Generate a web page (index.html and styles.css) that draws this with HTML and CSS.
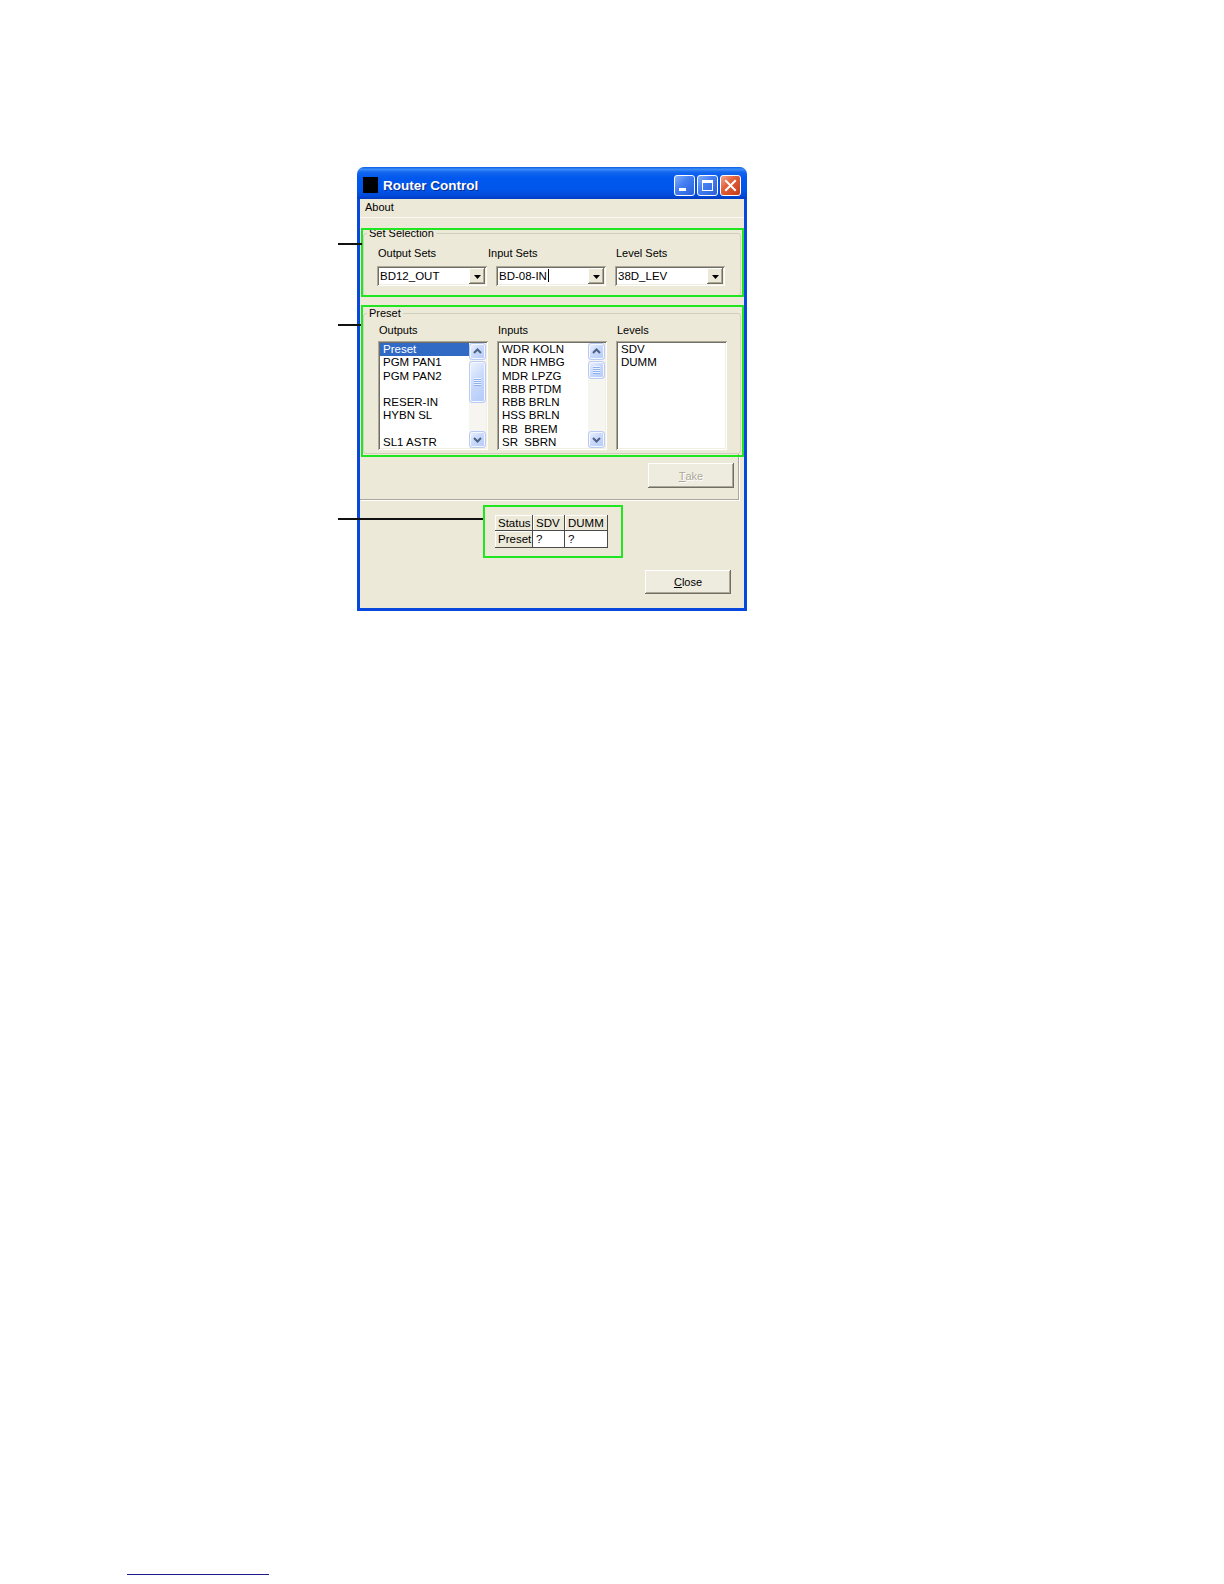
FILE: index.html
```html
<!DOCTYPE html>
<html lang="en">
<head>
<meta charset="utf-8">
<title>Router Control</title>
<link rel="stylesheet" href="styles.css">
</head>
<body>
<div class="page">
  <div class="figure">
    <div class="window">
      <div class="titlebar">
        <div class="app-icon"></div>
        <div class="title">Router Control</div>
        <div class="tb-buttons">
          <div class="tb-btn"><svg width="19" height="19" viewBox="0 0 19 19"><rect x="4" y="12" width="7" height="3" fill="#fff"/></svg></div>
          <div class="tb-btn"><svg width="19" height="19" viewBox="0 0 19 19"><rect x="4.5" y="5.5" width="10" height="9" fill="none" stroke="#fff" stroke-width="1"/><rect x="4" y="4" width="11" height="3" fill="#fff"/></svg></div>
          <div class="tb-btn close"><svg width="19" height="19" viewBox="0 0 19 19"><path d="M5 5 L14 14 M14 5 L5 14" stroke="#fff" stroke-width="2" stroke-linecap="square"/></svg></div>
        </div>
      </div>
      <div class="client">
        <div class="menubar"><span class="menu-item">About</span></div>

        <fieldset class="group set-group">
          <legend>Set Selection</legend>
          <div class="set-body">
            <div class="lbl">Output Sets</div>
            <div class="lbl lbl-shift">Input Sets</div>
            <div class="lbl">Level Sets</div>
            <div class="combo"><span class="combo-text">BD12_OUT</span><span class="combo-btn"><svg width="7" height="4" viewBox="0 0 7 4"><polygon points="0,0 7,0 3.5,4" fill="#000"/></svg></span></div>
            <div class="combo"><span class="combo-text">BD-08-IN<span class="caret"></span></span><span class="combo-btn"><svg width="7" height="4" viewBox="0 0 7 4"><polygon points="0,0 7,0 3.5,4" fill="#000"/></svg></span></div>
            <div class="combo"><span class="combo-text">38D_LEV</span><span class="combo-btn"><svg width="7" height="4" viewBox="0 0 7 4"><polygon points="0,0 7,0 3.5,4" fill="#000"/></svg></span></div>
          </div>
        </fieldset>

        <fieldset class="group preset-group">
          <legend>Preset</legend>
          <div class="preset-body">
            <div class="lbl lbl-out">Outputs</div>
            <div class="lbl">Inputs</div>
            <div class="lbl">Levels</div>

            <div class="list">
              <div class="list-items">
                <div class="item sel">Preset</div>
                <div class="item">PGM PAN1</div>
                <div class="item">PGM PAN2</div>
                <div class="item">&nbsp;</div>
                <div class="item">RESER-IN</div>
                <div class="item">HYBN SL</div>
                <div class="item">&nbsp;</div>
                <div class="item">SL1 ASTR</div>
              </div>
              <div class="sb">
                <div class="sb-btn"><svg width="15" height="15" viewBox="0 0 15 15"><path d="M4 9 L7.5 5.5 L11 9" fill="none" stroke="#4D6185" stroke-width="2"/></svg></div>
                <div class="sb-track"><div class="sb-thumb thumb-long"><div class="grip"></div></div></div>
                <div class="sb-btn"><svg width="15" height="15" viewBox="0 0 15 15"><path d="M4 6 L7.5 9.5 L11 6" fill="none" stroke="#4D6185" stroke-width="2"/></svg></div>
              </div>
            </div>

            <div class="list">
              <div class="list-items">
                <div class="item">WDR KOLN</div>
                <div class="item">NDR HMBG</div>
                <div class="item">MDR LPZG</div>
                <div class="item">RBB PTDM</div>
                <div class="item">RBB BRLN</div>
                <div class="item">HSS BRLN</div>
                <div class="item">RB  BREM</div>
                <div class="item">SR  SBRN</div>
              </div>
              <div class="sb">
                <div class="sb-btn"><svg width="15" height="15" viewBox="0 0 15 15"><path d="M4 9 L7.5 5.5 L11 9" fill="none" stroke="#4D6185" stroke-width="2"/></svg></div>
                <div class="sb-track"><div class="sb-thumb thumb-short"><div class="grip"></div></div></div>
                <div class="sb-btn"><svg width="15" height="15" viewBox="0 0 15 15"><path d="M4 6 L7.5 9.5 L11 6" fill="none" stroke="#4D6185" stroke-width="2"/></svg></div>
              </div>
            </div>

            <div class="list">
              <div class="list-items">
                <div class="item">SDV</div>
                <div class="item">DUMM</div>
              </div>
            </div>
          </div>
        </fieldset>

        <div class="take-panel">
          <div class="btn disabled"><span class="acc">T</span>ake</div>
        </div>

        <div class="bottom">
          <table class="grid">
            <tr class="row-head"><td class="fixed">Status</td><td class="fixed">SDV</td><td class="fixed">DUMM</td></tr>
            <tr class="row-data"><td class="fixed">Preset</td><td class="cell">?</td><td class="cell">?</td></tr>
          </table>
          <div class="btn close-btn"><span class="acc">C</span>lose</div>
        </div>
      </div>
    </div>
  </div>

  <div class="mark mark-set"></div>
  <div class="mark mark-preset"></div>
  <div class="mark mark-status"></div>
  <div class="callout callout-set"></div>
  <div class="callout callout-preset"></div>
  <div class="callout callout-status"></div>

  <div class="footer-link"></div>
</div>
</body>
</html>
```

FILE: styles.css
```css
* { box-sizing: border-box; }
html, body { margin: 0; padding: 0; background: #fff; }
body { font-family: "Liberation Sans", Arial, sans-serif; font-size: 11px; color: #000; }

.page { position: relative; width: 1224px; height: 1584px; overflow: hidden; }
.figure { padding: 167px 0 0 357px; }

.window { width: 390px; }

.titlebar {
  height: 32px;
  border-radius: 7px 7px 0 0;
  background: linear-gradient(to bottom, #0A5AE6 0%, #3D8EF8 7%, #1466EE 16%, #0058EE 34%, #0056EA 70%, #004BDC 88%, #003CC2 100%);
  display: flex;
  align-items: center;
  padding: 4px 6px 0 6px;
}
.app-icon { width: 15px; height: 16px; background: #000; flex: none; }
.title {
  flex: 1;
  margin-left: 5px;
  color: #fff;
  font-weight: bold;
  font-size: 13.5px;
  text-shadow: 1px 1px 0 #0A2A8A;
  white-space: nowrap;
}
.tb-buttons { display: flex; gap: 2px; }
.tb-btn {
  width: 21px; height: 21px;
  border: 1px solid #fff;
  border-radius: 3px;
  background: linear-gradient(135deg, #86AEF8 0%, #4680F2 40%, #2A60DC 100%);
}
.tb-btn.close { background: linear-gradient(135deg, #F4A68C 0%, #E2603A 40%, #C53C17 100%); }
.tb-btn svg { display: block; }

.client {
  background: #ECE9D8;
  border: 3px solid #0848DC;
  border-top: none;
}

.menubar {
  height: 19px;
  line-height: 17px;
  padding-left: 5px;
  border-bottom: 1px solid #FBFAF6;
}

.group {
  margin: 0 3px;
  padding: 0;
  border: 1px solid #D0D0BF;
  border-radius: 3px;
  min-width: 0;
}
.group legend {
  padding: 0 2px;
  margin-left: 3px;
  line-height: 13px;
  font-size: 11px;
}
.set-group { margin-top: 9px; }
.preset-group { margin-top: 11px; }

.set-body {
  display: grid;
  grid-template-columns: 110px 110px 110px;
  grid-template-rows: 13px 20px;
  column-gap: 9px;
  row-gap: 6px;
  padding: 7px 0 9px 13px;
}
.preset-body {
  display: grid;
  grid-template-columns: 110px 110px 111px;
  grid-template-rows: 13px 109px;
  column-gap: 9px;
  row-gap: 4px;
  padding: 4px 0 3px 14px;
}

.lbl { line-height: 13px; white-space: nowrap; padding-left: 1px; }
.lbl-shift { margin-left: -9px; }

.combo {
  height: 20px;
  background: #fff;
  display: flex;
  align-items: center;
  padding: 2px;
  box-shadow: inset 1px 1px 0 #ACA899, inset -1px -1px 0 #fff, inset 2px 2px 0 #716F64, inset -2px -2px 0 #F1EFE2;
}
.combo-text { flex: 1; padding-left: 1px; font-size: 11.5px; line-height: 16px; white-space: nowrap; }
.caret { display: inline-block; width: 1px; height: 13px; background: #000; vertical-align: -2px; margin-left: 1px; }
.combo-btn {
  width: 16px; height: 16px;
  background: #ECE9D8;
  box-shadow: inset -1px -1px 0 #716F64, inset 1px 1px 0 #fff, inset -2px -2px 0 #ACA899;
  display: flex;
  align-items: center;
  justify-content: center;
  padding-top: 2px;
}
.combo-btn svg { display: block; }

.list {
  height: 109px;
  background: #fff;
  padding: 2px;
  display: flex;
  box-shadow: inset 1px 1px 0 #ACA899, inset -1px -1px 0 #fff, inset 2px 2px 0 #716F64, inset -2px -2px 0 #F1EFE2;
}
.list-items { flex: 1; min-width: 0; }
.item { height: 13.3px; line-height: 13.3px; padding-left: 3px; font-size: 11.5px; white-space: pre; }
.item.sel { background: #316AC5; color: #fff; }

.sb { width: 17px; display: flex; flex-direction: column; background: #F6F5EF; }
.sb-btn, .sb-thumb {
  border: 1px solid #B9CBF5;
  border-radius: 3px;
  background: linear-gradient(135deg, #EEF3FE 0%, #CADAFC 45%, #B4C9F7 100%);
  box-shadow: inset 0 0 0 1px #F4F7FE;
}
.sb-btn { height: 17px; display: flex; align-items: center; justify-content: center; }
.sb-btn svg { display: block; }
.sb-track { flex: 1; padding-top: 1px; }
.sb-thumb { display: flex; align-items: center; justify-content: center; }
.thumb-long { height: 42px; }
.thumb-short { height: 18px; }
.grip { width: 7px; height: 8px; background: repeating-linear-gradient(to bottom, #EEF4FE 0, #EEF4FE 1px, #8DAEF3 1px, #8DAEF3 2px); }

.take-panel {
  margin-right: 5px;
  height: 46px;
  padding: 9px 4px 0 0;
  display: flex;
  justify-content: flex-end;
  align-items: flex-start;
  border-right: 1px solid #ACA899;
  border-bottom: 1px solid #ACA899;
  box-shadow: 1px 1px 0 #fff;
}

.btn {
  width: 86px; height: 25px;
  background: #EEEBDF;
  box-shadow: inset -1px -1px 0 #716F64, inset 1px 1px 0 #fff, inset -2px -2px 0 #ACA899;
  display: flex;
  align-items: center;
  justify-content: center;
  font-size: 11px;
}
.btn.disabled { color: #ACA899; text-shadow: 1px 1px 0 #fff; }
.acc { text-decoration: underline; }

.bottom { padding: 15px 0 14px 0; }
.grid {
  margin-left: 135px;
  border-collapse: separate;
  border-spacing: 0;
  table-layout: fixed;
  width: 113px;
  font-size: 11.5px;
}
.grid td {
  padding: 0 0 0 3px;
  white-space: nowrap;
  overflow: hidden;
  border-right: 1px solid #4A4A4A;
  border-bottom: 1px solid #4A4A4A;
  vertical-align: middle;
}
.grid td:nth-child(1) { width: 38px; }
.grid td:nth-child(2) { width: 32px; }
.grid td:nth-child(3) { width: 43px; }
.row-head td { height: 16px; line-height: 14px; }
.row-data td { height: 17px; line-height: 15px; }
.grid .fixed { background: #ECE9D8; box-shadow: inset 1px 1px 0 #fff; }
.grid .cell { background: #fff; }

.close-btn { height: 24px; margin: 22px 0 0 285px; }

.mark { position: absolute; border: 2px solid #1FE61F; }
.mark-set { left: 361px; top: 228px; width: 383px; height: 69px; }
.mark-preset { left: 361px; top: 305px; width: 383px; height: 152px; }
.mark-status { left: 483px; top: 505px; width: 140px; height: 53px; }

.callout { position: absolute; height: 2px; background: #111; }
.callout-set { left: 338px; top: 243px; width: 24px; }
.callout-preset { left: 338px; top: 324px; width: 23px; }
.callout-status { left: 338px; top: 518px; width: 145px; }

.footer-link { margin: 963px 0 0 127px; width: 142px; height: 1px; background: #1B1B8F; }
```
